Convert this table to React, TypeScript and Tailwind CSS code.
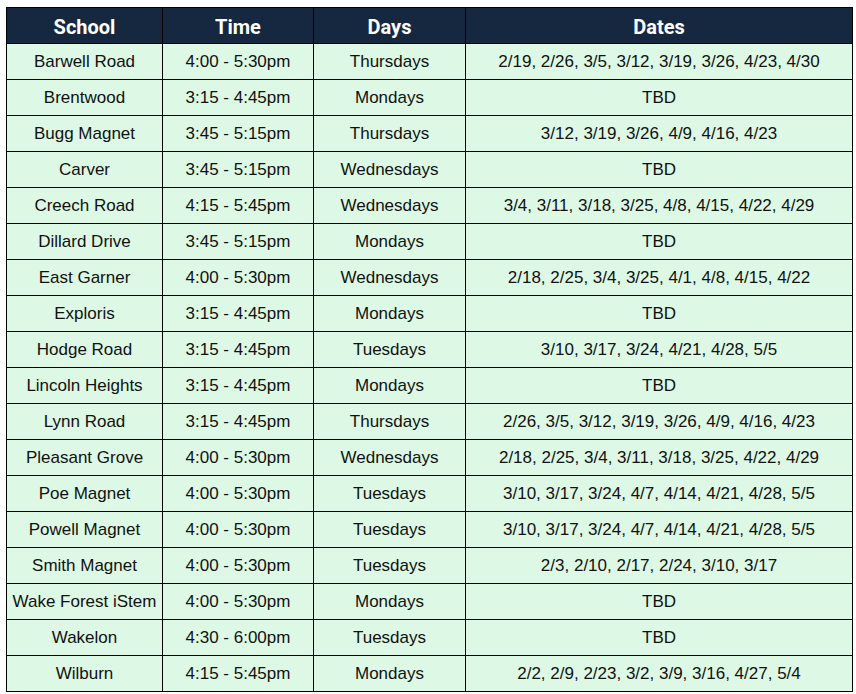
import React from 'react';

type Row = [string, string, string, string];

const rows: Row[] = [
  ['Barwell Road', '4:00 - 5:30pm', 'Thursdays', '2/19, 2/26, 3/5, 3/12, 3/19, 3/26, 4/23, 4/30'],
  ['Brentwood', '3:15 - 4:45pm', 'Mondays', 'TBD'],
  ['Bugg Magnet', '3:45 - 5:15pm', 'Thursdays', '3/12, 3/19, 3/26, 4/9, 4/16, 4/23'],
  ['Carver', '3:45 - 5:15pm', 'Wednesdays', 'TBD'],
  ['Creech Road', '4:15 - 5:45pm', 'Wednesdays', '3/4, 3/11, 3/18, 3/25, 4/8, 4/15, 4/22, 4/29'],
  ['Dillard Drive', '3:45 - 5:15pm', 'Mondays', 'TBD'],
  ['East Garner', '4:00 - 5:30pm', 'Wednesdays', '2/18, 2/25, 3/4, 3/25, 4/1, 4/8, 4/15, 4/22'],
  ['Exploris', '3:15 - 4:45pm', 'Mondays', 'TBD'],
  ['Hodge Road', '3:15 - 4:45pm', 'Tuesdays', '3/10, 3/17, 3/24, 4/21, 4/28, 5/5'],
  ['Lincoln Heights', '3:15 - 4:45pm', 'Mondays', 'TBD'],
  ['Lynn Road', '3:15 - 4:45pm', 'Thursdays', '2/26, 3/5, 3/12, 3/19, 3/26, 4/9, 4/16, 4/23'],
  ['Pleasant Grove', '4:00 - 5:30pm', 'Wednesdays', '2/18, 2/25, 3/4, 3/11, 3/18, 3/25, 4/22, 4/29'],
  ['Poe Magnet', '4:00 - 5:30pm', 'Tuesdays', '3/10, 3/17, 3/24, 4/7, 4/14, 4/21, 4/28, 5/5'],
  ['Powell Magnet', '4:00 - 5:30pm', 'Tuesdays', '3/10, 3/17, 3/24, 4/7, 4/14, 4/21, 4/28, 5/5'],
  ['Smith Magnet', '4:00 - 5:30pm', 'Tuesdays', '2/3, 2/10, 2/17, 2/24, 3/10, 3/17'],
  ['Wake Forest iStem', '4:00 - 5:30pm', 'Mondays', 'TBD'],
  ['Wakelon', '4:30 - 6:00pm', 'Tuesdays', 'TBD'],
  ['Wilburn', '4:15 - 5:45pm', 'Mondays', '2/2, 2/9, 2/23, 3/2, 3/9, 3/16, 4/27, 5/4'],
];

const headers = ['School', 'Time', 'Days', 'Dates'];

export default function App() {
  return (
    <div className="min-h-screen bg-white pt-[7px] pl-[6px]">
      <table className="w-[847px] table-fixed border-collapse border border-black font-['Liberation_Sans',Arial,sans-serif] text-[17px] text-[#111]">
        <colgroup>
          <col className="w-[156px]" />
          <col className="w-[151px]" />
          <col className="w-[152px]" />
          <col />
        </colgroup>
        <thead>
          <tr className="h-[36px] bg-[#152840]">
            {headers.map((h) => (
              <th
                key={h}
                className="border border-black p-0 pt-[2px] text-center align-middle font-['Roboto',sans-serif] text-[20px] font-bold leading-none text-white"
              >
                {h}
              </th>
            ))}
          </tr>
        </thead>
        <tbody>
          {rows.map((r) => (
            <tr key={r[0]} className="h-[36px] bg-[#ddf9e5]">
              {r.map((cell, i) => (
                <td key={i} className="border border-black p-0 text-center align-middle leading-none">
                  {cell}
                </td>
              ))}
            </tr>
          ))}
        </tbody>
      </table>
    </div>
  );
}
